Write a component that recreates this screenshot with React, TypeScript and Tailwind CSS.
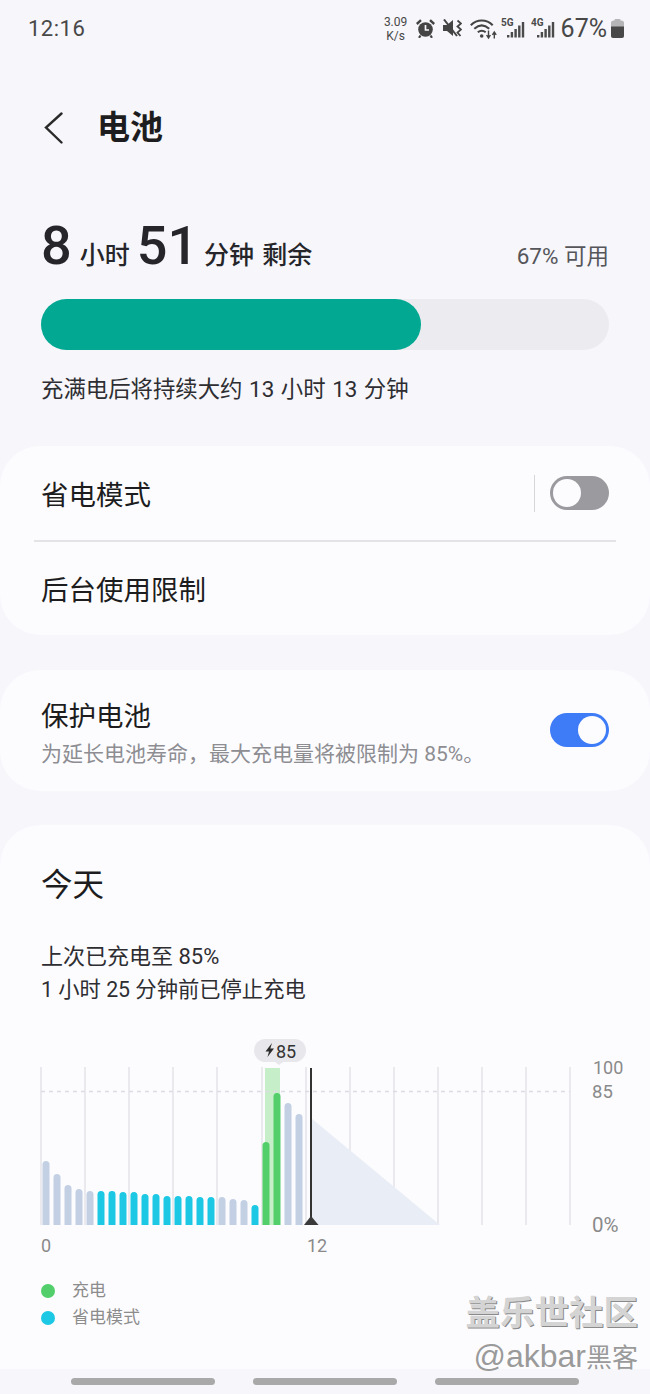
import React from 'react'

const BARS: [number, string][] = [
  [1161, 'g'], [1174, 'g'], [1185, 'g'], [1189, 'g'], [1191, 'g'],
  [1191, 'c'], [1191, 'c'], [1192, 'c'], [1192, 'c'], [1194, 'c'], [1194, 'c'],
  [1196, 'c'], [1196, 'c'], [1196, 'c'], [1197, 'c'], [1197, 'c'],
  [1197, 'g'], [1199, 'g'], [1200, 'g'], [1205, 'c'],
  [1142, 'n'], [1093, 'n'], [1103, 'g'], [1114, 'g'],
]
const BAR_COLORS: Record<string, string> = { g: '#c3d0e4', c: '#1cc8e3', n: '#52cf6b' }
const GRID = [41, 85, 129, 173, 217, 262, 306, 350, 394, 438, 482, 526, 570]

function Toggle({ on }: { on: boolean }) {
  return (
    <div className={`w-[59px] h-[34px] rounded-full p-[3px] flex ${on ? 'bg-[#3e7bf6] justify-end' : 'bg-[#9a9a9f] justify-start'}`}>
      <div className="w-[28px] h-[28px] rounded-full bg-[#fcfcff]" />
    </div>
  )
}

function Signal({ label, className }: { label: string; className: string }) {
  return (
    <svg className={className} width="24" height="20" viewBox="0 0 24 20" fill="#4a4a4a">
      <text x="0" y="8" fontSize="10" fontWeight="700" fontFamily="Roboto">{label}</text>
      <rect x="6" y="17" width="2.4" height="2.5" />
      <rect x="9.7" y="14" width="2.4" height="5.5" />
      <rect x="13.4" y="11" width="2.4" height="8.5" />
      <rect x="17.1" y="7.5" width="2.4" height="12" />
      <rect x="20.8" y="4" width="2.4" height="15.5" />
    </svg>
  )
}

function StatusBar() {
  return (
    <div className="h-[56px] pl-[28px] pr-[26px] flex items-center justify-between text-[#484848]">
      <span className="text-[22px] tracking-[0.5px]">12:16</span>
      <div className="flex items-center">
        <div className="w-[24px] flex flex-col items-center text-[12px] leading-[14px] mt-[1px] whitespace-nowrap">
          <span>3.09</span>
          <span>K/s</span>
        </div>
        {/* alarm */}
        <svg className="ml-[8px]" width="19" height="19" viewBox="0 0 19 19">
          <circle cx="9.5" cy="10.5" r="7.3" fill="#444" />
          <path d="M9.5 6V11H13" stroke="#f6f6fb" strokeWidth="1.7" fill="none" />
          <path d="M0.8 5L5 1.2M18.2 5L14 1.2" stroke="#444" strokeWidth="2.4" fill="none" />
          <path d="M4.5 16.5L3 18.8M14.5 16.5L16 18.8" stroke="#444" strokeWidth="2.2" fill="none" />
        </svg>
        {/* mute vibrate */}
        <svg className="ml-[8px]" width="19" height="18" viewBox="0 0 19 18">
          <path d="M0 6H4L10 1V17L4 12H0Z" fill="#444" />
          <path d="M1 0.5L14 17" stroke="#444" strokeWidth="2" />
          <path d="M14.5 1.5L18 4.5L14.5 7.5L18 10.5L14.5 13.5L17.5 17" stroke="#444" strokeWidth="1.8" fill="none" />
        </svg>
        {/* wifi */}
        <svg className="ml-[8px]" width="27" height="21" viewBox="0 0 27 21">
          <path d="M0.8 7.2C7 1 16.5 1 22.7 7.2" stroke="#444" strokeWidth="2.1" fill="none" />
          <path d="M4.3 10.8C9 6.5 14.5 6.5 19.2 10.8" stroke="#444" strokeWidth="2.1" fill="none" />
          <path d="M7.8 14.3C10.3 12.3 13.2 12.3 15.7 14.3" stroke="#444" strokeWidth="2.1" fill="none" />
          <circle cx="11.7" cy="18" r="1.8" fill="#444" />
          <path d="M18.5 12.5V19M16.6 17L18.5 20L20.4 17" stroke="#444" strokeWidth="1.4" fill="none" />
          <path d="M24.3 20.5V14.5M22.4 16.8L24.3 14L26.2 16.8" stroke="#444" strokeWidth="1.4" fill="none" />
        </svg>
        <Signal label="5G" className="ml-[4px]" />
        <Signal label="4G" className="ml-[6px]" />
        <span className="ml-[6px] text-[25px] leading-none">67%</span>
        {/* battery */}
        <svg className="ml-[4px]" width="13" height="19" viewBox="0 0 13 19">
          <rect x="3.5" y="0" width="6" height="3" rx="1" fill="#b5b5b7" />
          <rect x="0" y="1.5" width="13" height="17.5" rx="2.5" fill="#b5b5b7" />
          <path d="M0 7.5H13V16.5A2.5 2.5 0 0 1 10.5 19H2.5A2.5 2.5 0 0 1 0 16.5Z" fill="#484848" />
        </svg>
      </div>
    </div>
  )
}

function Chart() {
  const bottom = 1225
  return (
    <div className="relative h-[230px] mt-[24px]">
      {/* svg coordinates are page coordinates, offset by the chart's origin */}
      <svg className="absolute left-0 top-0" width="650" height="230" viewBox="0 1030 650 230">
        {GRID.map(x => (
          <rect key={x} x={x - 0.75} y={1067} width="1.5" height="158" fill="#e3e3e9" />
        ))}
        <path d="M311 1118L440 1225H311Z" fill="#e9eef6" />
        <rect x="265" y="1068" width="15" height="157" fill="#c5eec9" />
        <line x1="41" y1="1091.5" x2="570" y2="1091.5" stroke="#dcdce2" strokeWidth="1.3" strokeDasharray="4 4" />
        {BARS.map(([top, kind], i) => (
          <path
            key={i}
            d={`M${42.5 + i * 11} ${bottom}V${top + 3.5}a3.5 3.5 0 0 1 7 0V${bottom}Z`}
            fill={BAR_COLORS[kind]}
          />
        ))}
        <rect x="254" y="1039" width="52" height="23" rx="11.5" fill="#e8e8ec" />
        <path d="M275 1062H283L279 1065Z" fill="#e8e8ec" />
        <path d="M272 1043L265.5 1051.5H269L267.5 1057L274 1048.5H270.3Z" fill="#2b2b2b" />
        <rect x="310" y="1068" width="2" height="150" fill="#333" />
        <path d="M311 1216L318.5 1225H304Z" fill="#3a3a3a" />
      </svg>
      <span className="absolute left-[276px] top-[10px] text-[18px] leading-[24px] text-[#333]">85</span>
      <span className="absolute left-[41px] top-[205px] text-[18px] leading-[22px] text-[#8a8a8a]">0</span>
      <span className="absolute left-[307px] top-[205px] text-[18px] leading-[22px] text-[#8a8a8a]">12</span>
      <span className="absolute left-[593px] top-[27px] text-[18px] leading-[22px] text-[#8a8a8a]">100</span>
      <span className="absolute left-[592px] top-[51px] text-[18.5px] leading-[22px] text-[#8a8a8a]">85</span>
      <span className="absolute left-[592px] top-[184px] text-[20.5px] leading-[22px] text-[#8a8a8a]">0%</span>
    </div>
  )
}

export default function App() {
  return (
    <div
      className="relative w-[650px] h-[1394px] overflow-hidden bg-[#f6f6fb] text-[#1d1d20]"
      style={{ fontFamily: 'Roboto, "Noto Sans CJK SC", sans-serif' }}
    >
      <StatusBar />

      <div className="h-[116px] pt-[28px] flex items-center pl-[44px]">
        <svg width="20" height="32" viewBox="0 0 20 32" fill="none">
          <path d="M17.5 1.5L2 15.5L17.5 30.5" stroke="#2a2a2a" strokeWidth="2.4" strokeLinecap="round" strokeLinejoin="miter" />
        </svg>
        <h1 className="ml-[33px] text-[33px] leading-[40px] font-bold">电池</h1>
      </div>

      <div className="mt-[42px] px-[41px]">
        <div className="flex items-baseline justify-between">
          <div className="flex items-baseline font-medium text-[#25252a]">
            <span className="text-[54px] leading-[64px]">8</span>
            <span className="ml-[8px] text-[25px]">小时</span>
            <span className="ml-[7px] text-[54px] leading-[64px]">51</span>
            <span className="ml-[6px] text-[25px]">分钟</span>
            <span className="ml-[8px] text-[25px]">剩余</span>
          </div>
          <span className="text-[22.5px] text-[#55555a]">67% 可用</span>
        </div>
        <div className="mt-[21px] h-[51px] w-[568px] rounded-full bg-[#ececf0]">
          <div className="h-[51px] w-[380px] rounded-full bg-[#02a892]" />
        </div>
        <p className="mt-[24px] text-[22.4px] leading-[30px] text-[#2e2e32] [word-spacing:1px]">充满电后将持续大约 13 小时 13 分钟</p>
      </div>

      <div className="mt-[42px] h-[189px] rounded-[40px] bg-[#fcfcff]">
        <div className="h-[94px] px-[41px] flex items-center justify-between">
          <span className="text-[27.5px] mt-[6px]">省电模式</span>
          <div className="flex items-center">
            <div className="w-[1.5px] h-[37px] bg-[#d6d6da] mr-[15px]" />
            <Toggle on={false} />
          </div>
        </div>
        <div className="mx-[34px] h-[2px] bg-[#e3e3e8]" />
        <div className="h-[93px] pl-[41px] flex items-center">
          <span className="text-[27.5px] mt-[5px]">后台使用限制</span>
        </div>
      </div>

      <div className="mt-[35px] h-[121px] rounded-[40px] bg-[#fcfcff] px-[41px] flex items-center justify-between">
        <div className="mt-[9px]">
          <div className="text-[27.5px] leading-[38px]">保护电池</div>
          <div className="text-[21px] leading-[36px] text-[#8d8d92]">为延长电池寿命，最大充电量将被限制为 85%。</div>
        </div>
        <div className="mt-[-2px]">
          <Toggle on />
        </div>
      </div>

      <div className="mt-[34px] h-[544px] rounded-t-[40px] bg-[#fcfcff]">
        <div className="pl-[41px] pt-[39px] text-[31.5px] leading-[44px]">今天</div>
        <div className="pl-[41px] mt-[32px] leading-[33px] text-[#2e2e32]">
          <div className="text-[22px]">上次已充电至 85%</div>
          <div className="text-[21.3px]">1 小时 25 分钟前已停止充电</div>
        </div>
        <Chart />
        <div className="pl-[41px] mt-[17px] text-[17px] text-[#8c8c8c]">
          <div className="flex items-center h-[27px]">
            <div className="w-[14px] h-[14px] rounded-full bg-[#52cf6b]" />
            <span className="ml-[17px]">充电</span>
          </div>
          <div className="flex items-center h-[27px]">
            <div className="w-[14px] h-[14px] rounded-full bg-[#1cc8e3]" />
            <span className="ml-[17px]">省电模式</span>
          </div>
        </div>
      </div>

      <div className="flex justify-center gap-[38px] pt-[9px]">
        <div className="w-[144px] h-[7px] rounded-full bg-[#a9a9a9]" />
        <div className="w-[144px] h-[7px] rounded-full bg-[#a9a9a9]" />
        <div className="w-[144px] h-[7px] rounded-full bg-[#a9a9a9]" />
      </div>

      {/* watermark lies over the page */}
      <div className="absolute right-[12px] top-[1292px] text-right">
        <div className="text-[34.5px] leading-[42px] font-bold text-[#d4d4d4] [text-shadow:1px_1px_0_#8a8a8a]">盖乐世社区</div>
        <div className="mt-[4px] text-[32px] leading-[36px] text-[#9a9a9a] whitespace-nowrap" style={{ fontFamily: '"Liberation Sans", "Noto Sans CJK SC", sans-serif' }}>
          @akbar<span className="text-[26px]">黑客</span>
        </div>
      </div>
    </div>
  )
}
